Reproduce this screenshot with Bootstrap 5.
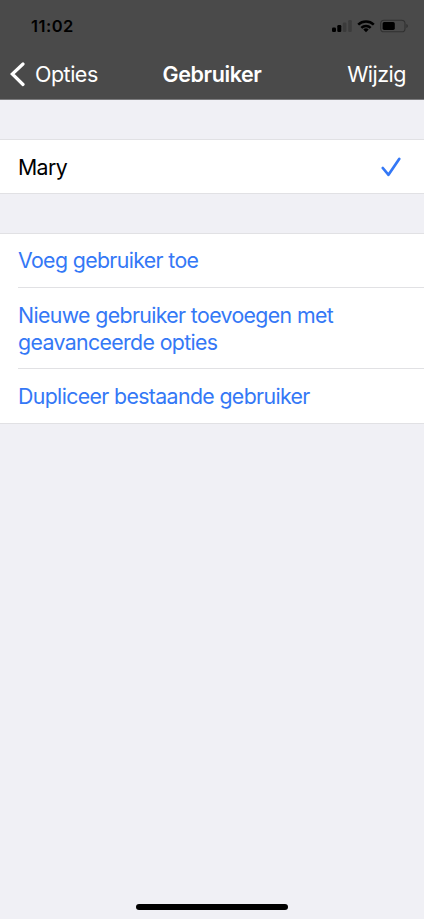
<!DOCTYPE html>
<html lang="nl">
<head>
<meta charset="utf-8">
<meta name="viewport" content="width=device-width, initial-scale=1">
<title>Gebruiker</title>
<link href="https://cdn.jsdelivr.net/npm/bootstrap@5.3.0/dist/css/bootstrap.min.css" rel="stylesheet">
<style>
  body { font-family: Inter, "Liberation Sans", sans-serif; font-size: 21.5px; line-height: 27px; background: #f0f0f5; color: #000; letter-spacing: -.5px; }
  svg { display: block; flex: none; }
  .top-area { height: 100px; background: #4a4a4a; border-bottom: 1px solid #7b7b7d; }
  .status-bar { height: 49px; padding: 3px 16px 0 31px; }
  .clock { font-size: 16.5px; letter-spacing: .5px; }
  .title-bar { display: grid; grid-template-columns: 1fr auto 1fr; height: 50px; padding: 0 18px 0 10px; color: #fff; }
  .back-label { margin-left: 10px; }
  .heading { font-size: 21.5px; line-height: 27px; letter-spacing: -.4px; padding-left: 8px; }
  .settings { --bs-list-group-border-color: #e1e1e4; --bs-list-group-bg: #fff; margin-top: 39px; border-top: 1px solid #e1e1e4; border-bottom: 1px solid #e1e1e4; background: #fff; font-size: 21.3px; letter-spacing: -.63px; }
  .settings .list-group-item { margin-left: 18px; padding: 13px 23px 13px 0; color: #000; }
  .settings .list-group-item-action { color: #3478f6; width: auto; padding-right: 60px; }
  .settings .list-group-item-action:nth-child(2) { padding: 13.5px 60px 12.5px 0; }
  .settings .list-group-item-action:last-child { padding-top: 14px; }
  .user-name { padding-top: 1px; margin-bottom: -1px; }
  .home-bar { width: 152px; height: 6px; margin-bottom: 9px; background: #000; }
</style>
<script src="https://cdn.jsdelivr.net/npm/bootstrap@5.3.0/dist/js/bootstrap.bundle.min.js"></script>
</head>
<body class="d-flex flex-column min-vh-100">
<header class="top-area">
  <div class="status-bar d-flex align-items-center justify-content-between">
    <span class="clock fw-semibold">11:02</span>
    <svg width="77" height="16" viewBox="331 18 77 16" aria-hidden="true">
      <rect x="332" y="27.5" width="4" height="4.5" rx="1.2"/>
      <rect x="337.3" y="25" width="4" height="7" rx="1.2"/>
      <rect x="342.8" y="22.5" width="3.6" height="9.5" rx="1.2" fill="#3b3b3b"/>
      <rect x="348.2" y="20" width="3.6" height="12" rx="1.2" fill="#3b3b3b"/>
      <g fill="none" stroke="#000" stroke-width="2.5">
        <path d="M358.2 24.6a11.3 11.3 0 0 1 15.6 0"/>
        <path d="M361.3 27.8a6.9 6.9 0 0 1 9.4 0"/>
      </g>
      <path d="M363.3 29.5a4 4 0 0 1 5.4 0L366 32.3z"/>
      <rect x="380.7" y="20.2" width="24.3" height="11.6" rx="3.4" fill="none" stroke="#303030" stroke-width="1.1"/>
      <rect x="382.6" y="22.1" width="12.2" height="7.8" rx="1.6"/>
      <path d="M406.3 24v4q1.6-.6 1.6-2t-1.6-2z" fill="#303030"/>
    </svg>
  </div>
  <nav class="title-bar align-items-center" aria-label="Navigatie">
    <a href="#" class="d-flex align-items-center text-white text-decoration-none">
      <svg width="15" height="26" viewBox="0 0 15 26" fill="none" stroke="#fff" stroke-width="3.2" stroke-linecap="round" aria-hidden="true"><path d="M13 3 2.3 13 13 23.5"/></svg>
      <span class="back-label">Opties</span>
    </a>
    <h1 class="heading fw-semibold mb-0">Gebruiker</h1>
    <a href="#" class="text-white text-decoration-none text-end">Wijzig</a>
  </nav>
</header>
<main class="flex-grow-1">
  <div class="settings list-group list-group-flush rounded-0">
    <div class="list-group-item d-flex align-items-center justify-content-between">
      <span class="user-name">Mary</span>
      <svg width="20" height="20" viewBox="0 0 20 20" fill="none" stroke="#3478f6" stroke-width="2.7" stroke-linecap="round" stroke-linejoin="round" aria-label="Geselecteerd"><path d="M1.8 11 7.5 17.8 18.2 1.9"/></svg>
    </div>
  </div>
  <div class="settings list-group list-group-flush rounded-0">
    <a href="#" class="list-group-item list-group-item-action">Voeg gebruiker toe</a>
    <a href="#" class="list-group-item list-group-item-action">Nieuwe gebruiker toevoegen met geavanceerde opties</a>
    <a href="#" class="list-group-item list-group-item-action">Dupliceer bestaande gebruiker</a>
  </div>
</main>
<div class="home-bar rounded-pill mx-auto"></div>
</body>
</html>
